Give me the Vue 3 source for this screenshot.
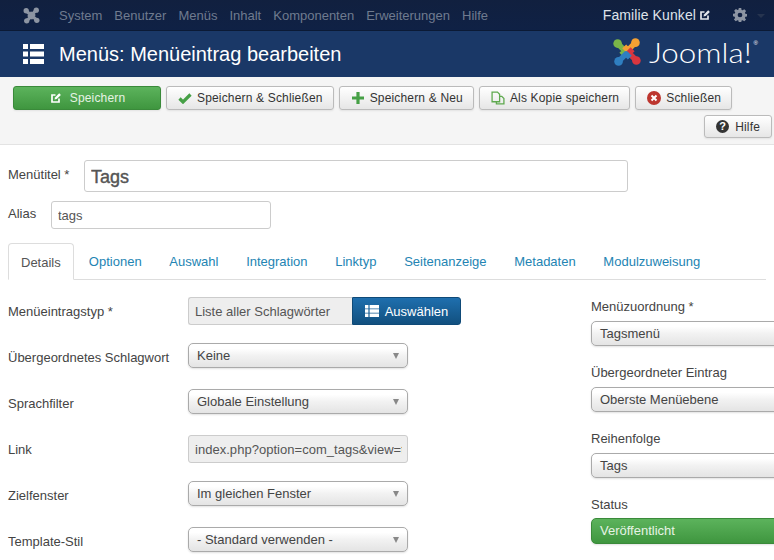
<template>
  <div class="page">
    <nav class="navbar">
      <svg class="nav-logo" viewBox="0 0 32 32" width="17" height="17">
        <g v-for="arm in logoArms" :key="arm.angle" :transform="`rotate(${arm.angle} 16 16)`">
          <path d="M6 7 L14 15 L10 19" fill="none" stroke="#8d95a3" stroke-width="6" stroke-linejoin="round" />
          <circle cx="6" cy="7" r="5" fill="#8d95a3" />
        </g>
      </svg>
      <ul class="nav-menu">
        <li v-for="item in navItems" :key="item">{{ item }}</li>
      </ul>
      <div class="nav-right">
        <span class="site-name">Familie Kunkel</span>
        <svg class="ext-icon" viewBox="0 0 12 12" width="12" height="12">
          <path d="M9 6.5 V10 H2 V3 H5.5" fill="none" stroke="#e4e7ec" stroke-width="1.7" />
          <path d="M4.5 7.5 L5 5.4 L9.2 1.2 L10.9 2.9 L6.7 7.1 Z" fill="#e4e7ec" />
        </svg>
        <svg class="gear" viewBox="0 0 16 16" width="14" height="14">
          <path fill="#8d95a3" fill-rule="evenodd" d="M6.6 0h2.8l.4 2.2 1.2.5 1.9-1.3 2 2-1.3 1.9.5 1.2 2.2.4v2.8l-2.2.4-.5 1.2 1.3 1.9-2 2-1.9-1.3-1.2.5-.4 2.2H6.6l-.4-2.2-1.2-.5-1.9 1.3-2-2 1.3-1.9-.5-1.2L-.1 9.4V6.6l2.2-.4.5-1.2-1.3-1.9 2-2L5.2 2.4l1-.4zM8 5.3a2.7 2.7 0 1 0 0 5.4 2.7 2.7 0 0 0 0-5.4z" />
        </svg>
        <span class="caret"></span>
      </div>
    </nav>

    <header class="title-bar">
      <svg class="title-icon" viewBox="0 0 21 20" width="21" height="20">
        <path fill="#fff" d="M0 0h5v5H0zM7 0h14v5H7zM0 7.5h5v5H0zM7 7.5h14v5H7zM0 15h5v5H0zM7 15h14v5H7z" />
      </svg>
      <h1>Menüs: Menüeintrag bearbeiten</h1>
      <div class="brand">
        <svg viewBox="0 0 32 32" width="30" height="30">
          <g v-for="arm in logoArms" :key="arm.angle" :transform="`rotate(${arm.angle} 16 16)`">
            <path d="M6 7 L14 15 L10 19" fill="none" :stroke="arm.color" stroke-width="6" stroke-linejoin="round" />
            <circle cx="6" cy="7" r="4.6" :fill="arm.color" />
          </g>
        </svg>
        <span class="brand-text">Joomla!</span>
        <sup>®</sup>
      </div>
    </header>

    <div class="toolbar">
      <button class="btn btn-save">
        <svg viewBox="0 0 12 12" width="12" height="12">
          <path d="M9 6.5 V10 H2 V3 H5.5" fill="none" stroke="#fff" stroke-width="1.7" />
          <path d="M4.5 7.5 L5 5.4 L9.2 1.2 L10.9 2.9 L6.7 7.1 Z" fill="#fff" />
        </svg>
        Speichern
      </button>
      <button class="btn">
        <svg viewBox="0 0 14 12" width="14" height="12">
          <path d="M1.5 6.5 L5 10 L12.5 2.5" fill="none" stroke="#46a046" stroke-width="3.2" />
        </svg>
        Speichern &amp; Schließen
      </button>
      <button class="btn">
        <svg viewBox="-1 0 14 12" width="14" height="12">
          <path fill="#46a046" d="M4.4 0h3.2v4.4H12v3.2H7.6V12H4.4V7.6H0V4.4h4.4z" />
        </svg>
        Speichern &amp; Neu
      </button>
      <button class="btn">
        <svg viewBox="0 0 13 13" width="14" height="14">
          <path fill="none" stroke="#5fa94f" stroke-width="1.2" d="M1 1h5l2 2v7H1zM8 5h2l2 2v5H5v-2" />
        </svg>
        Als Kopie speichern
      </button>
      <button class="btn">
        <svg viewBox="0 0 14 14" width="14" height="14">
          <circle cx="7" cy="7" r="7" fill="#bd362f" />
          <path d="M4.5 4.5 L9.5 9.5 M9.5 4.5 L4.5 9.5" stroke="#fff" stroke-width="2" />
        </svg>
        Schließen
      </button>
      <button class="btn btn-help">
        <span class="help-dot">?</span>
        Hilfe
      </button>
    </div>

    <main class="content">
      <div class="title-row">
        <label>Menütitel *</label>
        <input class="title-input" value="Tags" />
      </div>
      <div class="alias-row">
        <label>Alias</label>
        <input class="alias-input" value="tags" />
      </div>

      <ul class="tabs">
        <li v-for="(tab, i) in tabs" :key="tab" :class="{ active: i === 0 }">{{ tab }}</li>
      </ul>

      <div class="columns">
        <div class="left-col">
          <div class="row">
            <label>Menüeintragstyp *</label>
            <div class="type-group">
              <span class="type-value">Liste aller Schlagwörter</span>
              <button class="btn-choose">
                <svg viewBox="0 0 14 12" width="14" height="12">
                  <path fill="#fff" d="M0 0h3.4v3.4H0zM4.6 0H14v3.4H4.6zM0 4.3h3.4v3.4H0zM4.6 4.3H14v3.4H4.6zM0 8.6h3.4V12H0zM4.6 8.6H14V12H4.6z" />
                </svg>
                Auswählen
              </button>
            </div>
          </div>
          <div class="row" v-for="f in leftFields" :key="f.label">
            <label>{{ f.label }}</label>
            <input v-if="f.readonly" class="link-input" :value="f.value" readonly />
            <div v-else class="select">
              <span>{{ f.value }}</span>
              <i class="arrow"></i>
            </div>
          </div>
        </div>

        <div class="right-col">
          <div class="side-field" v-for="f in rightFields" :key="f.label">
            <label>{{ f.label }}</label>
            <div class="select wide" :class="{ green: f.green }">
              <span>{{ f.value }}</span>
            </div>
          </div>
        </div>
      </div>
    </main>
  </div>
</template>

<script setup>
const navItems = ['System', 'Benutzer', 'Menüs', 'Inhalt', 'Komponenten', 'Erweiterungen', 'Hilfe']

const logoArms = [
  { angle: 0, color: '#7ab648' },
  { angle: 90, color: '#f4a033' },
  { angle: 180, color: '#d8363f' },
  { angle: 270, color: '#2f7fc1' }
]

const tabs = ['Details', 'Optionen', 'Auswahl', 'Integration', 'Linktyp', 'Seitenanzeige', 'Metadaten', 'Modulzuweisung']

const leftFields = [
  { label: 'Übergeordnetes Schlagwort', value: 'Keine' },
  { label: 'Sprachfilter', value: 'Globale Einstellung' },
  { label: 'Link', value: 'index.php?option=com_tags&view=tags', readonly: true },
  { label: 'Zielfenster', value: 'Im gleichen Fenster' },
  { label: 'Template-Stil', value: '- Standard verwenden -' }
]

const rightFields = [
  { label: 'Menüzuordnung *', value: 'Tagsmenü' },
  { label: 'Übergeordneter Eintrag', value: 'Oberste Menüebene' },
  { label: 'Reihenfolge', value: 'Tags' },
  { label: 'Status', value: 'Veröffentlicht', green: true }
]
</script>

<style>
html, body {
  margin: 0;
  overflow: hidden;
}
</style>

<style scoped>
.page {
  width: 774px;
  height: 560px;
  overflow: hidden;
  background: #fff;
  color: #444;
  font-family: "Liberation Sans", Arial, sans-serif;
  font-size: 13px;
}

.navbar {
  height: 31px;
  box-sizing: border-box;
  display: flex;
  align-items: center;
  padding-left: 23px;
  background: linear-gradient(#11203f, #0f2145);
  border-bottom: 1px solid #0b1a35;
}
.nav-logo {
  margin-right: 19px;
}
.nav-menu {
  display: flex;
  gap: 12px;
  list-style: none;
  margin: 0;
  padding: 0;
  color: #6f7b8f;
  font-size: 13px;
}
.nav-right {
  margin-left: auto;
  display: flex;
  align-items: center;
  color: #dfe3ea;
  font-size: 14px;
}
.site-name {
  letter-spacing: 0.1px;
}
.ext-icon {
  margin-left: 3px;
}
.gear {
  margin-left: 22px;
}
.caret {
  margin: 2px 9px 0 10px;
  border-left: 4px solid transparent;
  border-right: 4px solid transparent;
  border-top: 4px solid #26344f;
}

.title-bar {
  height: 46px;
  display: flex;
  align-items: center;
  padding-left: 23px;
  background: #1a3867;
  color: #fff;
}
.title-bar h1 {
  margin: 0 0 0 15px;
  font-size: 20px;
  font-weight: 400;
}
.brand {
  margin-left: auto;
  margin-right: 19px;
  margin-top: -5px;
  display: flex;
  align-items: center;
}
.brand-text {
  width: 105px;
  margin-left: 7px;
  font-family: Lato, sans-serif;
  font-weight: 300;
  font-size: 28px;
  line-height: 30px;
  white-space: nowrap;
  transform: scaleX(1.12);
  transform-origin: left center;
}
.brand sup {
  font-size: 6px;
  align-self: flex-start;
  margin: 2px -3px 0 0;
  line-height: 8px;
}

.toolbar {
  height: 68px;
  box-sizing: border-box;
  display: flex;
  flex-wrap: wrap;
  align-content: flex-start;
  gap: 5px;
  padding: 9px 2px 0 13px;
  background: #f5f5f5;
  border-bottom: 1px solid #e3e3e3;
}
.btn {
  height: 24px;
  box-sizing: border-box;
  display: flex;
  align-items: center;
  justify-content: center;
  gap: 5px;
  padding: 0 10px 0 11px;
  border: 1px solid #bbb;
  border-radius: 3px;
  background: linear-gradient(#fff, #e6e6e6);
  box-shadow: 0 1px 2px rgba(0, 0, 0, 0.08);
  color: #333;
  font: inherit;
  font-size: 12px;
  letter-spacing: 0.17px;
}
.btn-save {
  width: 148px;
  gap: 8px;
  background: linear-gradient(#5cb35c, #3f963f);
  border-color: #3a8a3a;
  color: #e6f3e4;
}
.btn-help {
  margin-left: auto;
  height: 23px;
  gap: 6px;
  padding: 0 11px;
}
.help-dot {
  width: 13px;
  height: 13px;
  border-radius: 50%;
  background: #333;
  color: #fff;
  font-size: 11px;
  font-weight: 700;
  line-height: 13px;
  text-align: center;
  letter-spacing: 0;
}

.content {
  padding: 15px 8px 0;
}
.title-row,
.alias-row {
  display: flex;
  align-items: center;
}
label {
  font-size: 13px;
  color: #444;
}
input {
  box-sizing: border-box;
  border: 1px solid #ccc;
  border-radius: 3px;
  font-family: inherit;
  color: #555;
  outline: none;
}
.title-row label {
  width: 76px;
  margin-top: -3px;
}
.title-input {
  width: 544px;
  height: 32px;
  padding: 2px 6px 0;
  font-size: 18px;
  -webkit-text-stroke: 0.4px #555;
}
.alias-row {
  margin-top: 9px;
}
.alias-row label {
  width: 43px;
  margin-top: -4px;
}
.alias-input {
  width: 220px;
  height: 28px;
  padding: 0 6px;
  font-size: 13px;
}

.tabs {
  display: flex;
  list-style: none;
  margin: 14px 0 0;
  padding: 0;
  height: 36px;
  border-bottom: 1px solid #ddd;
}
.tabs li {
  padding: 0 13.85px;
  height: 36px;
  line-height: 37px;
  color: #2384b3;
  font-size: 13px;
  box-sizing: border-box;
}
.tabs li.active {
  width: 66px;
  padding: 0 0 0 12px;
  margin-right: 1px;
  height: 37px;
  border: 1px solid #ddd;
  border-bottom-color: #fff;
  border-radius: 4px 4px 0 0;
  color: #555;
}

.columns {
  display: flex;
  align-items: flex-start;
}
.left-col {
  width: 583px;
  flex: none;
  padding-top: 17px;
}
.row {
  display: flex;
  align-items: center;
  height: 28px;
  margin-bottom: 18px;
}
.row label {
  width: 180px;
  flex: none;
  margin-top: 1px;
}
.type-group {
  display: flex;
  height: 28px;
}
.type-value {
  width: 164px;
  box-sizing: border-box;
  padding-left: 6px;
  line-height: 27px;
  background: #eee;
  border: 1px solid #ccc;
  border-right: none;
  border-radius: 3px 0 0 3px;
  color: #555;
  white-space: nowrap;
}
.btn-choose {
  width: 109px;
  display: flex;
  align-items: center;
  justify-content: center;
  gap: 6px;
  border: 1px solid #0f4a78;
  border-radius: 0 3px 3px 0;
  background: linear-gradient(#1f6fae, #12507f);
  color: #fff;
  font: inherit;
  padding: 0;
}
.select {
  position: relative;
  width: 220px;
  height: 25px;
  box-sizing: border-box;
  margin-top: -3px;
  padding-left: 8px;
  line-height: 24px;
  border: 1px solid #aaa;
  border-radius: 5px;
  background: linear-gradient(#fff 20%, #f2f2f2 50%, #e4e4e4 100%);
  box-shadow: 0 1px 2px rgba(0, 0, 0, 0.12);
  color: #444;
}
.arrow {
  position: absolute;
  right: 8px;
  top: 9px;
  border-left: 3.5px solid transparent;
  border-right: 3.5px solid transparent;
  border-top: 6px solid #888;
}
.link-input {
  width: 220px;
  height: 28px;
  padding: 0 5px 0 6px;
  background: #eee;
  font-size: 13px;
  letter-spacing: 0.03px;
}

.right-col {
  padding-top: 19px;
  flex: none;
}
.side-field {
  margin-bottom: 19px;
}
.side-field label {
  display: block;
  line-height: 16px;
  margin-bottom: 6px;
}
.select.wide {
  width: 300px;
  margin-top: 0;
}
.select.green {
  height: 26px;
  margin-top: -1px;
  background: linear-gradient(#5cb35c, #3f963f);
  border-color: #3a8a3a;
  color: #e6f3e4;
}
</style>
